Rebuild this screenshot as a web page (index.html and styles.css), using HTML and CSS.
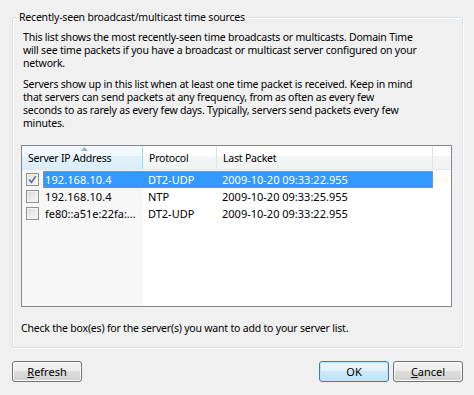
FILE: index.html
```html
<!DOCTYPE html>
<html>
<head>
<meta charset="utf-8">
<link rel="stylesheet" href="styles.css">
</head>
<body>
<div class="dialog">
  <fieldset class="group">
    <legend class="group-title">Recently-seen broadcast/multicast time sources</legend>
    <p class="para">This list shows the most recently-seen time broadcasts or multicasts. Domain Time<br>will see time packets if you have a broadcast or multicast server configured on your<br>network.</p>
    <p class="para para-2">Servers show up in this list when at least one time packet is received. Keep in mind<br>that servers can send packets at any frequency, from as often as every few<br>seconds to as rarely as every few days. Typically, servers send packets every few<br>minutes.</p>
    <div class="list">
      <div class="list-head">
        <div class="hcell sorted"><svg class="sort-arrow" width="7" height="4" viewBox="0 0 7 4"><path d="M0 4 L3.5 0 L7 4 Z" fill="#97b3c9"/></svg>Server IP Address</div>
        <div class="hcell">Protocol</div>
        <div class="hcell">Last Packet</div>
        <div class="hcell last"></div>
      </div>
      <div class="list-body">
        <div class="row">
          <span class="check checked"><svg width="11" height="11" viewBox="0 0 11 11"><path d="M2.2 5.6 L4.4 8.4 L8.8 2.2" fill="none" stroke="#5a6f9e" stroke-width="1.6"/></svg></span>
          <div class="cells selected">
            <span class="cell c1 ip">192.168.10.4</span>
            <span class="cell c2">DT2-UDP</span>
            <span class="cell c3">2009-10-20 09:33:22.955</span>
          </div>
        </div>
        <div class="row">
          <span class="check"></span>
          <div class="cells">
            <span class="cell c1 ip">192.168.10.4</span>
            <span class="cell c2">NTP</span>
            <span class="cell c3">2009-10-20 09:33:25.955</span>
          </div>
        </div>
        <div class="row">
          <span class="check"></span>
          <div class="cells">
            <span class="cell c1">fe80::a51e:22fa:...</span>
            <span class="cell c2">DT2-UDP</span>
            <span class="cell c3">2009-10-20 09:33:22.955</span>
          </div>
        </div>
      </div>
    </div>
    <p class="hint">Check the box(es) for the server(s) you want to add to your server list.</p>
  </fieldset>
  <div class="buttons">
    <button class="btn"><u>R</u>efresh</button>
    <span class="spacer"></span>
    <button class="btn default">OK</button>
    <button class="btn"><u>C</u>ancel</button>
  </div>
</div>
</body>
</html>
```
FILE: styles.css
```css
html, body {
  margin: 0;
  padding: 0;
}
body {
  width: 474px;
  height: 395px;
  overflow: hidden;
  background: #f0f0f0;
  color: #000;
  font-family: "Noto Sans", "Open Sans", sans-serif;
  font-size: 11px;
  line-height: 13px;
}
.dialog {
  padding: 11px 11px 0 12px;
}
.group {
  margin: 0;
  border: 1px solid #d5dfe5;
  border-radius: 3px;
  box-shadow: 1px 1px 0 #fff, inset 1px 1px 0 #fff;
  padding: 7px 11px 12px 8px;
  min-width: 0;
}
.group-title,
.para,
.hint,
.hcell {
  font-size: 10.5px;
  letter-spacing: -0.2px;
}
.group-title {
  margin-left: -5px;
  padding: 0 3px;
  line-height: 13px;
}
.para {
  margin: 0;
  padding-left: 2px;
  white-space: nowrap;
}
.para-2 {
  margin-top: 8px;
}
.list {
  margin-top: 15px;
  width: 429px;
  height: 160px;
  border: 1px solid #828790;
  background: #fff;
  display: flex;
  flex-direction: column;
}
.list-head {
  display: grid;
  grid-template-columns: 121px 74px 216px 18px;
  height: 23px;
  border-bottom: 1px solid #e3e6ea;
}
.hcell {
  position: relative;
  display: flex;
  align-items: center;
  padding: 2px 0 0 6px;
  background: linear-gradient(#ffffff 0, #ffffff 45%, #f4f5f7 45%, #f2f3f5 100%);
  border-right: 1px solid #dfe3e8;
}
.hcell.sorted {
  background: linear-gradient(#f1f9fe 0, #f1f9fe 45%, #e0f1fb 45%, #dbeef9 100%);
  border-right: 1px solid #96d9f9;
}
.hcell.last {
  border-right: none;
}
.sort-arrow {
  position: absolute;
  top: 1px;
  left: 59px;
}
.list-body {
  flex: 1;
  padding-top: 1px;
  background: linear-gradient(to right, #f7f7f7 0, #f7f7f7 121px, #fff 121px);
}
.row {
  display: flex;
  align-items: center;
  height: 17px;
}
.check {
  box-sizing: border-box;
  width: 13px;
  height: 13px;
  margin-left: 4px;
  border: 1px solid #8f8f8f;
  background: linear-gradient(135deg, #dadada, #f9f9f9);
  box-shadow: inset 0 0 0 1px #f4f4f4;
  display: flex;
  align-items: center;
  justify-content: center;
}
.check.checked {
  background: linear-gradient(135deg, #dcdcdc, #fbfbfb);
}
.cells {
  box-sizing: border-box;
  margin-left: 4px;
  width: 390px;
  height: 17px;
  display: grid;
  grid-template-columns: 100px 74px 216px;
  align-items: center;
}
.cells.selected {
  background: #3399ff;
  color: #fff;
  outline: 1px dotted #d9893c;
  outline-offset: -1px;
}
.cell {
  white-space: nowrap;
  overflow: hidden;
}
.c1 {
  padding-left: 2px;
}
.c2, .c3 {
  padding-left: 5px;
}
.ip {
  letter-spacing: 0.1px;
}
.hint {
  margin: 15px 0 0;
  white-space: nowrap;
}
.buttons {
  display: flex;
  gap: 4px;
  margin-top: 13px;
}
.spacer {
  flex: 1;
}
.btn {
  box-sizing: border-box;
  width: 70px;
  height: 21px;
  padding: 0;
  border: 1px solid #707070;
  border-radius: 3px;
  background: linear-gradient(#f3f3f3 0, #ebebeb 50%, #dddddd 50%, #d0d0d0 100%);
  box-shadow: inset 0 0 0 1px #fbfbfb;
  font-family: inherit;
  font-size: 11px;
  line-height: 13px;
  color: #000;
}
.btn.default {
  border-color: #3c7fb1;
  background: linear-gradient(#eaf6fd 0, #e0f2fc 50%, #cdeafa 50%, #bde3f7 100%);
  box-shadow: inset 0 0 0 1px #c3e4f6;
}
```
